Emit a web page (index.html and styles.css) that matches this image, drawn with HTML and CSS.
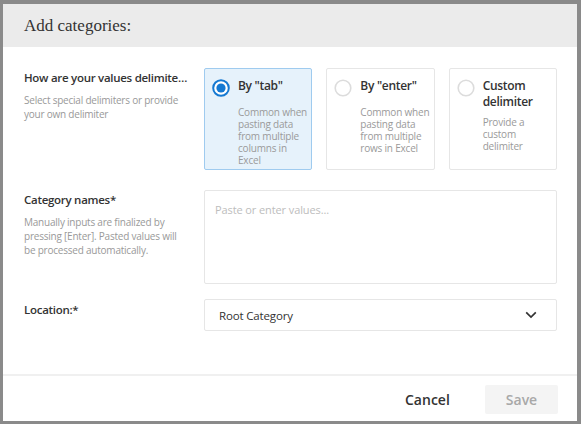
FILE: index.html
```html
<!DOCTYPE html>
<html>
<head>
<meta charset="utf-8">
<link rel="stylesheet" href="styles.css">
</head>
<body>
<div class="backdrop">
  <div class="modal">
    <div class="modal-header">Add categories:</div>
    <div class="modal-body">
      <div class="row row-delim">
        <div class="field-info">
          <div class="field-label">How are your values delimited?</div>
          <div class="field-help">Select special delimiters or provide your own delimiter</div>
        </div>
        <div class="cards">
          <div class="card selected">
            <div class="card-head">
              <svg class="radio" width="18" height="18" viewBox="0 0 18 18"><circle cx="9" cy="9" r="7.8" fill="#fff" stroke="#1479d2" stroke-width="2"/><circle cx="9" cy="9" r="4.6" fill="#1479d2"/></svg>
              <div class="card-title">By "tab"</div>
            </div>
            <div class="card-desc">Common when pasting data from multiple columns in Excel</div>
          </div>
          <div class="card">
            <div class="card-head">
              <svg class="radio" width="18" height="18" viewBox="0 0 18 18"><circle cx="9" cy="9" r="7.8" fill="#fff" stroke="#dcdcdc" stroke-width="1.6"/></svg>
              <div class="card-title">By "enter"</div>
            </div>
            <div class="card-desc">Common when pasting data from multiple rows in Excel</div>
          </div>
          <div class="card">
            <div class="card-head">
              <svg class="radio" width="18" height="18" viewBox="0 0 18 18"><circle cx="9" cy="9" r="7.8" fill="#fff" stroke="#dcdcdc" stroke-width="1.6"/></svg>
              <div class="card-title">Custom delimiter</div>
            </div>
            <div class="card-desc">Provide a custom delimiter</div>
          </div>
        </div>
      </div>
      <div class="row row-names">
        <div class="field-info">
          <div class="field-label">Category names*</div>
          <div class="field-help">Manually inputs are finalized by pressing [Enter]. Pasted values will be processed automatically.</div>
        </div>
        <div class="textarea"><span class="placeholder">Paste or enter values...</span></div>
      </div>
      <div class="row row-loc">
        <div class="field-info">
          <div class="field-label">Location:*</div>
        </div>
        <div class="select">
          <span>Root Category</span>
          <svg width="12" height="8" viewBox="0 0 12 8"><path d="M1.2 1.4 L6 6 L10.8 1.4" fill="none" stroke="#333" stroke-width="1.7"/></svg>
        </div>
      </div>
    </div>
    <div class="modal-footer">
      <button class="btn btn-cancel">Cancel</button>
      <button class="btn btn-save">Save</button>
    </div>
  </div>
</div>
</body>
</html>
```
FILE: styles.css
```css
* { box-sizing: border-box; }
html, body { margin: 0; padding: 0; }
body {
  width: 581px;
  height: 424px;
  background: #8a8a8a;
  font-family: "Open Sans", "Noto Sans", sans-serif;
  color: #333;
  overflow: hidden;
}
.backdrop {
  padding: 4px 4px 3px 3px;
  height: 424px;
}
.modal {
  background: #fff;
  height: 417px;
  display: flex;
  flex-direction: column;
}
.modal-header {
  background: #ebebeb;
  height: 43px;
  padding-left: 21px;
  display: flex;
  align-items: center;
  font-family: "Liberation Serif", serif;
  font-size: 17px;
  color: #333;
}
.modal-body {
  flex: 1;
  padding: 21px 20px 0 21px;
  display: flex;
  flex-direction: column;
}
.row {
  display: grid;
  grid-template-columns: 164px 1fr;
  column-gap: 16px;
}
.row-names { margin-top: 20px; }
.row-loc { margin-top: 15px; }
.field-info { padding-top: 2px; }
.row-loc .field-info { padding-top: 3px; }
.field-label {
  font-size: 11.5px;
  letter-spacing: -0.28px;
  font-weight: 600;
  line-height: 16px;
  white-space: nowrap;
  overflow: hidden;
  text-overflow: ellipsis;
  color: #333;
}
.field-help {
  margin-top: 7px;
  font-size: 10px;
  letter-spacing: -0.22px;
  line-height: 14px;
  color: #999;
}
.cards {
  display: grid;
  grid-template-columns: repeat(3, 1fr);
  column-gap: 14px;
  height: 102px;
}
.card {
  border: 1px solid #e6e6e6;
  border-radius: 2px;
  padding: 9px 2px 0 7px;
}
.card.selected {
  background: #e6f2fb;
  border-color: #9fcbef;
}
.card-head {
  display: flex;
  align-items: flex-start;
  gap: 8px;
  min-height: 22px;
}
.radio { flex: none; margin-top: 1px; }
.card-title {
  font-size: 12px;
  letter-spacing: -0.3px;
  font-weight: 600;
  line-height: 16px;
  color: #333;
}
.card-desc {
  margin: 6px 0 0 26px;
  font-size: 10px;
  letter-spacing: -0.2px;
  line-height: 12px;
  color: #9a9a9a;
}
.textarea {
  height: 94px;
  border: 1px solid #e6e6e6;
  border-radius: 2px;
  padding: 6px 10px;
}
.placeholder {
  font-size: 11px;
  letter-spacing: -0.1px;
  color: #bdbdbd;
}
.select {
  height: 32px;
  border: 1px solid #e6e6e6;
  border-radius: 2px;
  padding: 0 19px 0 14px;
  display: flex;
  align-items: center;
  justify-content: space-between;
  font-size: 11.5px;
  letter-spacing: -0.15px;
  color: #333;
}
.modal-footer {
  border-top: 2px solid #f0f0f0;
  height: 47px;
  padding: 9px 19px 0 0;
  display: flex;
  justify-content: flex-end;
  align-items: flex-start;
}
.btn {
  font-family: inherit;
  border: none;
  background: none;
  font-size: 14px;
  font-weight: 600;
  height: 29px;
  padding: 0;
  border-radius: 2px;
}
.btn-cancel {
  color: #333;
  width: 44px;
  margin-right: 36px;
}
.btn-save {
  width: 73px;
  background: #f4f4f4;
  color: #a8a8a8;
}
```
